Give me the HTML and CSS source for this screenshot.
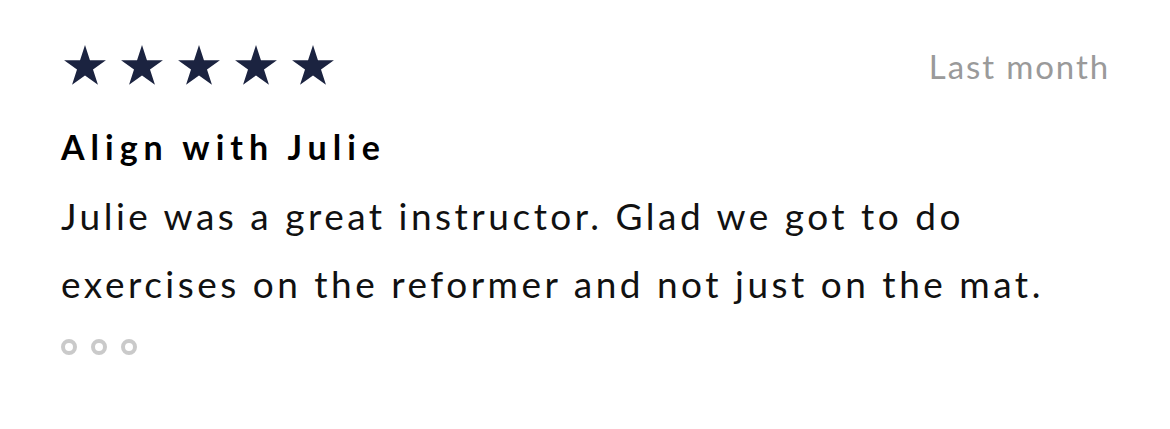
FILE: index.html
```html
<!DOCTYPE html>
<html>
<head>
<meta charset="utf-8">
<link rel="stylesheet" href="styles.css">
</head>
<body>
<div class="review">
  <div class="head">
    <div class="stars">
      <svg class="star" viewBox="0 0 24 24"><path d="M12 1.5l2.47 7.6h7.99l-6.46 4.7 2.47 7.6L12 16.7l-6.47 4.7 2.47-7.6-6.46-4.7h7.99z"/></svg>
      <svg class="star" viewBox="0 0 24 24"><path d="M12 1.5l2.47 7.6h7.99l-6.46 4.7 2.47 7.6L12 16.7l-6.47 4.7 2.47-7.6-6.46-4.7h7.99z"/></svg>
      <svg class="star" viewBox="0 0 24 24"><path d="M12 1.5l2.47 7.6h7.99l-6.46 4.7 2.47 7.6L12 16.7l-6.47 4.7 2.47-7.6-6.46-4.7h7.99z"/></svg>
      <svg class="star" viewBox="0 0 24 24"><path d="M12 1.5l2.47 7.6h7.99l-6.46 4.7 2.47 7.6L12 16.7l-6.47 4.7 2.47-7.6-6.46-4.7h7.99z"/></svg>
      <svg class="star" viewBox="0 0 24 24"><path d="M12 1.5l2.47 7.6h7.99l-6.46 4.7 2.47 7.6L12 16.7l-6.47 4.7 2.47-7.6-6.46-4.7h7.99z"/></svg>
    </div>
    <div class="date">Last month</div>
  </div>
  <h2 class="title">Align with Julie</h2>
  <p class="body">Julie was a great instructor. Glad we got to do<br>exercises on the reformer and not just on the mat.</p>
  <div class="dots"><span class="dot"></span><span class="dot"></span><span class="dot"></span></div>
</div>
</body>
</html>
```
FILE: styles.css
```css
html, body { margin: 0; padding: 0; background: #fff; }
body { font-family: Lato, "Noto Sans", sans-serif; }
.review { padding: 42px 62px 0 61px; }
.head { display: flex; justify-content: space-between; align-items: center; height: 48px; }
.stars { display: flex; gap: 9px; }
.star { width: 48px; height: 48px; fill: #1b2340; display: block; }
.date { font-size: 33px; color: #9a9a9a; letter-spacing: 1.9px; margin-right: -2px; }
.title { margin: 37px 0 0; font-size: 34px; font-weight: 700; color: #000; line-height: 40px; letter-spacing: 6px; }
.body { margin: 15px 0 0; font-size: 37px; line-height: 68px; color: #111; letter-spacing: 3.5px; }
.dots { display: flex; gap: 14px; margin-top: 21px; }
.dot { width: 8px; height: 8px; border: 4px solid #cacaca; border-radius: 50%; }
```
